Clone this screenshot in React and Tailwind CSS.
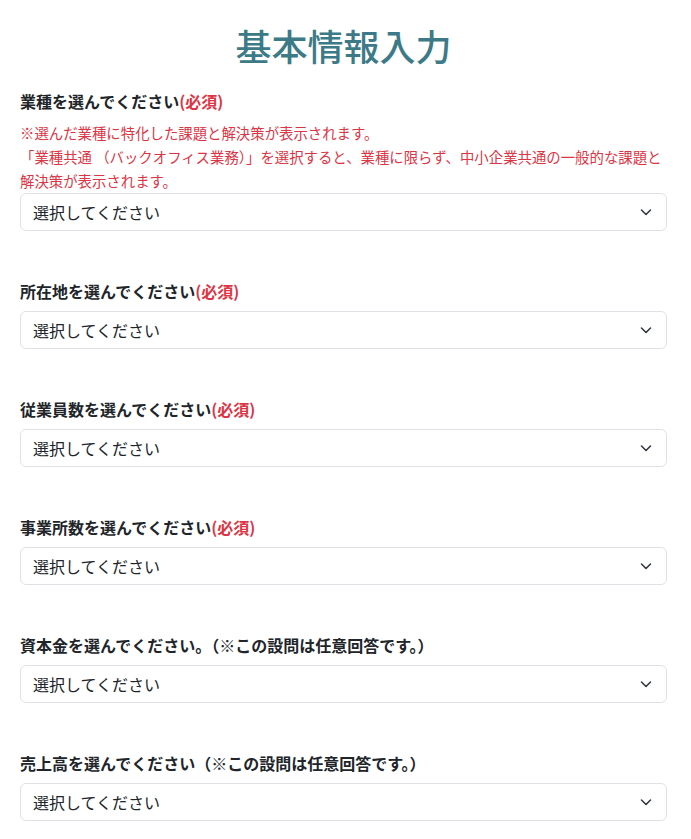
import React from "react"

const fields = [
  { label: "業種を選んでください", required: true, note: true },
  { label: "所在地を選んでください", required: true },
  { label: "従業員数を選んでください", required: true },
  { label: "事業所数を選んでください", required: true },
  { label: "資本金を選んでください。（※この設問は任意回答です。）" },
  { label: "売上高を選んでください（※この設問は任意回答です。）" },
]

function Chevron() {
  return (
    <svg width="16" height="16" viewBox="0 0 16 16" className="shrink-0">
      <path d="m3.5 6 4.5 4.5 4.5-4.5" fill="none" stroke="#343a40" strokeWidth="1.6" strokeLinecap="round" strokeLinejoin="round" />
    </svg>
  )
}

function SelectBox() {
  return (
    <div className="flex h-[38px] items-center justify-between rounded-md border border-[#dee2e6] bg-white pl-3 pr-3 text-base text-[#212529]">
      <span>選択してください</span>
      <Chevron />
    </div>
  )
}

export default function App() {
  return (
    <div
      className="min-h-screen bg-white px-5 pt-6 text-[#212529]"
      style={{ fontFamily: '"Noto Sans CJK JP", "Noto Sans", sans-serif' }}
    >
      <div className="w-[647px]">
        <h1 className="mb-[22px] text-center text-[36px] font-medium leading-[1.2] text-[#3d7a87]">
          基本情報入力
        </h1>

        {fields.map((f, i) => (
          <div key={i} className="mb-12">
            <div className="mb-2 text-base font-bold leading-6">
              {f.label}
              {f.required && <span className="text-[#dc3545]">(必須)</span>}
            </div>
            {f.note && (
              <div className="text-[14.4px] leading-6 text-[#dc3545]">
                ※選んだ業種に特化した課題と解決策が表示されます。
                <br />
                「業種共通 （バックオフィス業務）」を選択すると、業種に限らず、中小企業共通の一般的な課題と解決策が表示されます。
              </div>
            )}
            <SelectBox />
          </div>
        ))}
      </div>
    </div>
  )
}
